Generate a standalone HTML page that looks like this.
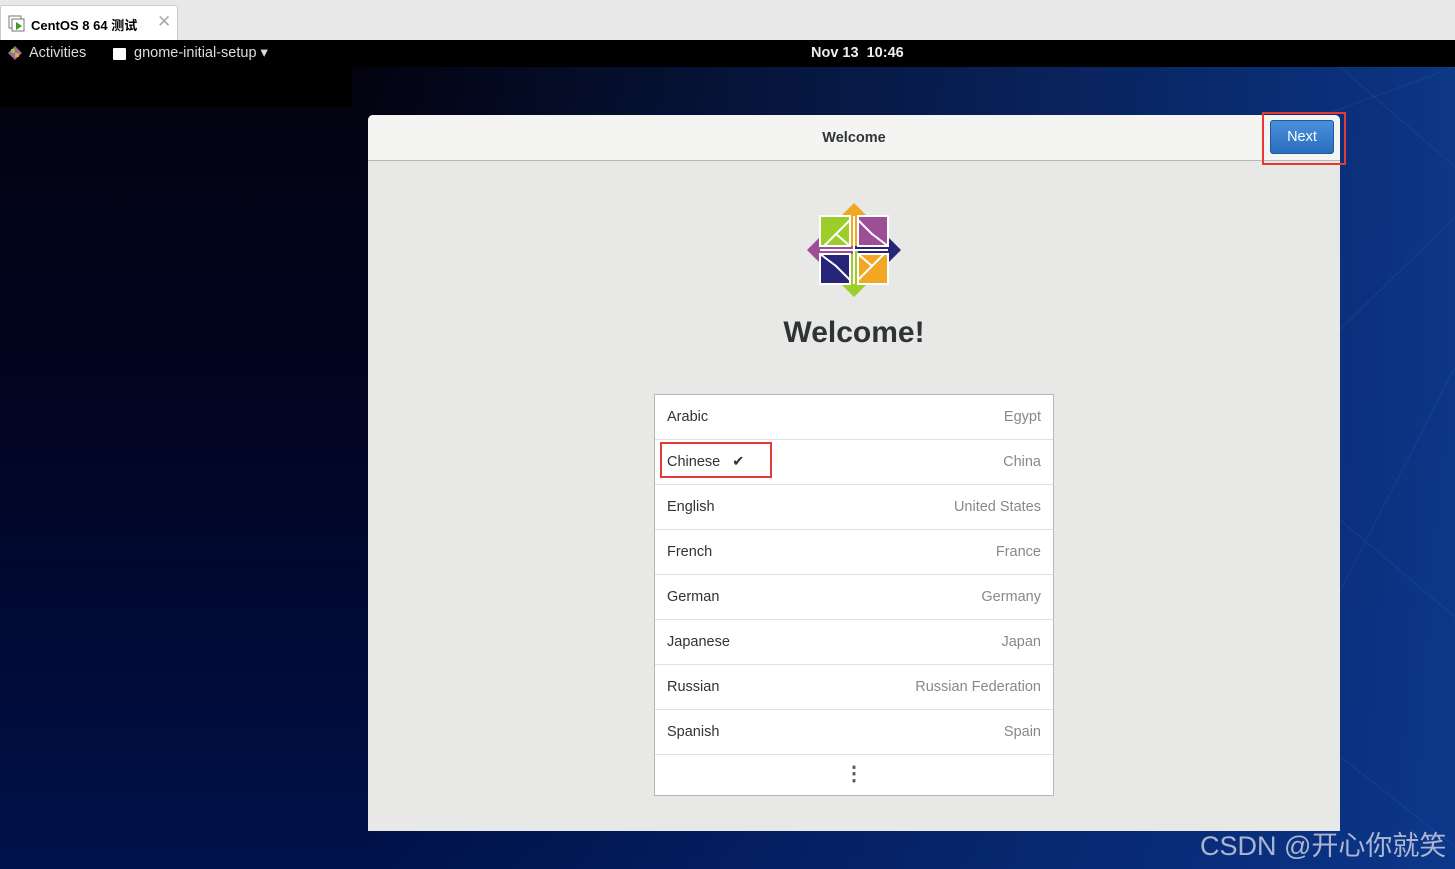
<!DOCTYPE html>
<html><head><meta charset="utf-8"><style>
*{margin:0;padding:0;box-sizing:border-box}
body{width:1455px;height:869px;overflow:hidden;position:relative;font-family:"Liberation Sans","Noto Sans CJK SC",sans-serif;background:#0a1a4a}
.tabbar{position:absolute;left:0;top:0;width:1455px;height:40px;background:#e8e8e8}
.tab{position:absolute;left:0;top:5px;width:178px;height:35px;background:#fff;border:1px solid #ccc;border-bottom:none;border-radius:3px 3px 0 0;font-size:13px;font-weight:bold;padding:9px 0 0 30px;color:#000}
.topbar{position:absolute;left:0;top:40px;width:1455px;height:27px;background:#000;color:#ddd;font-size:14.5px}
.desk{position:absolute;left:0;top:67px;width:1455px;height:802px;background:linear-gradient(90deg,rgba(0,0,0,0) 0%,rgba(0,0,0,0) 25%,rgba(12,55,140,.85) 92%,rgba(14,60,145,.9) 100%),linear-gradient(180deg,#030310 0%,#020420 40%,#010a35 70%,#00124a 100%)}
.win{position:absolute;left:368px;top:115px;width:972px;height:716px;background:#e8e8e7;border-radius:5px 5px 0 0}
.hdr{height:46px;background:#f4f4f3;border-bottom:1px solid #b8b8b6;border-radius:5px 5px 0 0;text-align:center;font-size:14.5px;font-weight:bold;color:#2e3436;line-height:46px}
.list{position:absolute;left:286px;top:279px;width:400px;height:402px;background:#fff;border:1px solid #b6b6b3}
.row{height:45px;border-bottom:1px solid #e0e0de;font-size:14.5px;color:#2e3436;line-height:44px;padding:0 12px;display:flex;justify-content:space-between}
.row span+span{color:#888a85}
</style></head><body>
<div class="tabbar"><div class="tab">CentOS 8 64 测试<span style="position:absolute;left:156px;top:6px;color:#aaa;font-weight:normal;font-size:17px">✕</span>
<svg style="position:absolute;left:7px;top:9px" width="18" height="18"><rect x="1" y="1" width="12" height="12" fill="none" stroke="#777"/><rect x="4" y="4" width="12" height="12" fill="#fff" stroke="#777"/><path d="M8 7 L14 11 L8 15Z" fill="#3a9a2a"/></svg></div></div>
<div class="topbar">
<svg style="position:absolute;left:8px;top:6px" width="14" height="14"><path d="M7 0L14 7L7 14L0 7Z" fill="#9a6aa0"/><rect x="3" y="3" width="4" height="4" fill="#9c3"/><rect x="7" y="7" width="4" height="4" fill="#e9a23b"/></svg>
<span style="position:absolute;left:29px;top:5px">Activities</span>
<span style="position:absolute;left:113px;top:8px;width:13px;height:12px;background:#fff;border-radius:1px"></span>
<span style="position:absolute;left:134px;top:5px">gnome-initial-setup ▾</span>
<span style="position:absolute;left:811px;top:5px;font-weight:bold;color:#eee">Nov 13&nbsp; 10:46</span>
</div>
<div class="desk">
<div style="position:absolute;left:0;top:0;width:352px;height:40px;background:#000"></div>
<svg style="position:absolute;left:1100px;top:0" width="355" height="802"><g stroke="#3a70d0" stroke-width="1" opacity=".2" fill="none"><path d="M0 130 L355 0"/><path d="M100 400 L355 150"/><path d="M150 700 L355 300"/><path d="M0 250 L355 550"/><path d="M0 500 L355 780"/><path d="M240 0 L355 100"/></g></svg>
</div>
<div class="win">
<div class="hdr">Welcome</div>
<div style="position:absolute;left:902px;top:5px;width:64px;height:34px;background:linear-gradient(#4a90d9,#2a6ebf);border:1px solid #1d5aa0;border-radius:3px;color:#fff;font-size:14.5px;text-align:center;line-height:32px">Next</div>
<div style="position:absolute;left:894px;top:-3px;width:84px;height:53px;border:2px solid #e53935"></div>
<svg style="position:absolute;left:438px;top:87px" width="96" height="96" viewBox="0 0 96 96">
<path d="M48 1L61 14L52 14L52 48L44 48L44 14L35 14Z" fill="#efa724"/>
<path d="M95 48L82 61L82 52L48 52L48 44L82 44L82 35Z" fill="#262577"/>
<path d="M48 95L35 82L44 82L44 48L52 48L52 82L61 82Z" fill="#9ccd2a"/>
<path d="M1 48L14 35L14 44L48 44L48 52L14 52L14 61Z" fill="#9c4f96"/>
<rect x="14" y="14" width="30" height="30" fill="#9ccd2a" stroke="#fff" stroke-width="2"/>
<rect x="52" y="14" width="30" height="30" fill="#9c4f96" stroke="#fff" stroke-width="2"/>
<rect x="14" y="52" width="30" height="30" fill="#262577" stroke="#fff" stroke-width="2"/>
<rect x="52" y="52" width="30" height="30" fill="#efa724" stroke="#fff" stroke-width="2"/>
<path d="M44 18L30 32L44 44M52 18L66 32L82 44M52 78L66 64L52 52M14 52L30 64L44 78M18 44L30 32M78 52L66 64" fill="none" stroke="#fff" stroke-width="2"/>
<path d="M48 14V82M14 48H82" stroke="#fff" stroke-width="2"/>
</svg>
<div style="position:absolute;left:0;width:972px;top:201px;text-align:center;font-size:30px;font-weight:bold;color:#2e3436">Welcome!</div>
<div class="list">
<div class="row"><span>Arabic</span><span>Egypt</span></div>
<div class="row"><span>Chinese &nbsp;&nbsp;✔</span><span>China</span></div>
<div class="row"><span>English</span><span>United States</span></div>
<div class="row"><span>French</span><span>France</span></div>
<div class="row"><span>German</span><span>Germany</span></div>
<div class="row"><span>Japanese</span><span>Japan</span></div>
<div class="row"><span>Russian</span><span>Russian Federation</span></div>
<div class="row"><span>Spanish</span><span>Spain</span></div>
<div style="text-align:center;font-size:20px;line-height:38px;color:#555;font-weight:bold">⋮</div>
</div>
<div style="position:absolute;left:292px;top:327px;width:112px;height:36px;border:2px solid #e53935"></div>
</div>
<div style="position:absolute;left:1200px;top:824px;color:#c8cde0;font-size:27px;font-family:'Liberation Sans','Noto Sans CJK SC',sans-serif;opacity:.85">CSDN @开心你就笑</div>
</body></html>
